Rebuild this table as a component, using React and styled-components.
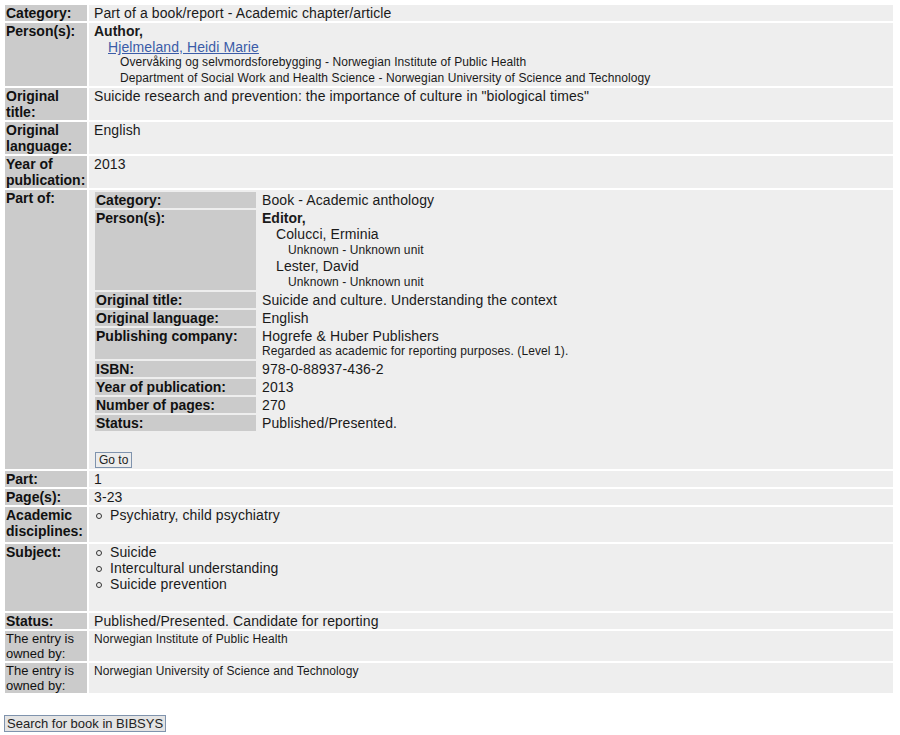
import React from 'react'
import styled, { createGlobalStyle, css } from 'styled-components'

const GlobalStyle = createGlobalStyle`
    body {
        margin: 0;
        background: #fff;
        font-family: "Liberation Sans", Arial, sans-serif;
        color: #1a1a1a;
    }
`

const record = {
    category: 'Part of a book/report - Academic chapter/article',
    role: 'Author,',
    person: 'Hjelmeland, Heidi Marie',
    units: [
        'Overvåking og selvmordsforebygging - Norwegian Institute of Public Health',
        'Department of Social Work and Health Science - Norwegian University of Science and Technology',
    ],
    title: 'Suicide research and prevention: the importance of culture in "biological times"',
    language: 'English',
    year: '2013',
    part: '1',
    pages: '3-23',
    disciplines: ['Psychiatry, child psychiatry'],
    subjects: ['Suicide', 'Intercultural understanding', 'Suicide prevention'],
    status: 'Published/Presented. Candidate for reporting',
    owners: ['Norwegian Institute of Public Health', 'Norwegian University of Science and Technology'],
}

const book = {
    editors: [
        { name: 'Colucci, Erminia', unit: 'Unknown - Unknown unit' },
        { name: 'Lester, David', unit: 'Unknown - Unknown unit' },
    ],
}

const App = () => (
    <Page>
        <GlobalStyle />
        <Grid>
            <Label>Category:</Label>
            <Value>{record.category}</Value>

            <Label>Person(s):</Label>
            <Value>
                <Role>{record.role}</Role>
                <PersonLink href="#">{record.person}</PersonLink>
                {record.units.map(u => <Unit key={u} tight>{u}</Unit>)}
            </Value>

            <Label>Original title:</Label>
            <Value>{record.title}</Value>

            <Label>Original language:</Label>
            <Value>{record.language}</Value>

            <Label>Year of publication:</Label>
            <Value>{record.year}</Value>

            <Label>Part of:</Label>
            <Value>
                <Nested>
                    <NestedLabel>Category:</NestedLabel>
                    <NestedValue>Book - Academic anthology</NestedValue>

                    <NestedLabel>Person(s):</NestedLabel>
                    <NestedValue>
                        <Role>Editor,</Role>
                        {book.editors.map(e => (
                            <React.Fragment key={e.name}>
                                <PersonName>{e.name}</PersonName>
                                <Unit>{e.unit}</Unit>
                            </React.Fragment>
                        ))}
                    </NestedValue>

                    <NestedLabel>Original title:</NestedLabel>
                    <NestedValue>Suicide and culture. Understanding the context</NestedValue>

                    <NestedLabel>Original language:</NestedLabel>
                    <NestedValue>English</NestedValue>

                    <NestedLabel>Publishing company:</NestedLabel>
                    <NestedValue>
                        Hogrefe &amp; Huber Publishers
                        <Note>Regarded as academic for reporting purposes. (Level 1).</Note>
                    </NestedValue>

                    <NestedLabel>ISBN:</NestedLabel>
                    <NestedValue>978-0-88937-436-2</NestedValue>

                    <NestedLabel>Year of publication:</NestedLabel>
                    <NestedValue>2013</NestedValue>

                    <NestedLabel>Number of pages:</NestedLabel>
                    <NestedValue>270</NestedValue>

                    <NestedLabel>Status:</NestedLabel>
                    <NestedValue>Published/Presented.</NestedValue>
                </Nested>
                <GoButton>Go to</GoButton>
            </Value>

            <Label>Part:</Label>
            <Value>{record.part}</Value>

            <Label>Page(s):</Label>
            <Value>{record.pages}</Value>

            <Label>Academic disciplines:</Label>
            <Value>
                <Bullets>
                    {record.disciplines.map(d => <Bullet key={d}>{d}</Bullet>)}
                </Bullets>
            </Value>

            <Label>Subject:</Label>
            <Value>
                <Bullets>
                    {record.subjects.map(s => <Bullet key={s}>{s}</Bullet>)}
                </Bullets>
            </Value>

            <Label>Status:</Label>
            <Value>{record.status}</Value>

            {record.owners.map(o => (
                <React.Fragment key={o}>
                    <Label plain>The entry is owned by:</Label>
                    <Value small>{o}</Value>
                </React.Fragment>
            ))}
        </Grid>
        <SearchButton>Search for book in BIBSYS</SearchButton>
    </Page>
)

export default App

const Page = styled.div`
    padding: 5px 7px 0 5px;
`

const Grid = styled.div`
    display: grid;
    grid-template-columns: 82px 1fr;
    gap: 2px;
    font-size: 14px;
    line-height: 16px;
`

const Label = styled.div`
    background: #cbcbcb;
    padding: 0 1px;
    font-weight: bold;
    color: #111;
    ${p => p.plain && css`
        font-weight: normal;
        font-size: 13px;
        line-height: 15px;
    `}
`

const Value = styled.div`
    background: #eeeeee;
    padding: 0 2px 0 5px;
    letter-spacing: 0.1px;
    ${p => p.small && css`
        font-size: 12px;
        line-height: 15px;
        padding-top: 1px;
    `}
`

const Role = styled.div`
    font-weight: bold;
    letter-spacing: 0;
`

const PersonLink = styled.a`
    display: block;
    margin-left: 14px;
    color: #3b5ca8;
    text-decoration: underline;
`

const PersonName = styled.div`
    margin-left: 14px;
`

const Unit = styled.div`
    margin-left: 26px;
    font-size: 12px;
    line-height: ${p => (p.tight ? '15.5px' : '16px')};
`

const Note = styled.div`
    font-size: 12px;
    line-height: 15px;
`

const Nested = styled.div`
    display: grid;
    grid-template-columns: 161px 1fr;
    gap: 2px;
    padding: 2px 0 0 1px;
    letter-spacing: 0;
`

const NestedLabel = styled.div`
    background: #cbcbcb;
    padding: 0 1px;
    font-weight: bold;
    color: #111;
`

const NestedValue = styled.div`
    padding: 0 0 0 4px;
    letter-spacing: 0.1px;
`

const buttonBase = css`
    font-family: "Liberation Sans", Arial, sans-serif;
    border: 1px solid #7f93ad;
    border-radius: 0;
    color: #222;
    cursor: pointer;
`

const GoButton = styled.button`
    ${buttonBase}
    display: block;
    margin: 21px 0 1px 1px;
    padding: 0 3px;
    height: 16px;
    font-size: 12px;
    line-height: 14px;
    background: #ececec;
`

const SearchButton = styled.button`
    ${buttonBase}
    display: block;
    margin: 22px 0 0 -1px;
    padding: 0 2px;
    height: 17px;
    font-size: 13px;
    line-height: 15px;
    background: #e4e4e4;
`

const Bullets = styled.ul`
    list-style: none;
    margin: 0 0 19px;
    padding: 0;
`

const Bullet = styled.li`
    display: flex;
    align-items: center;

    &::before {
        content: '';
        width: 4px;
        height: 4px;
        border: 1px solid #333;
        border-radius: 50%;
        margin: 1px 8px 0 2px;
    }
`
